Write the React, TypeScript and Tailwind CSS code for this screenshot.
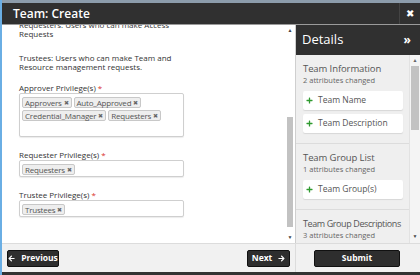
import { FaArrowLeft, FaArrowRight, FaPlus } from 'react-icons/fa';

const font = { fontFamily: '"Open Sans", "Liberation Sans", sans-serif' };

function Tag({ label }: { label: string }) {
  return (
    <span className="flex h-[11px] items-center gap-[2px] rounded-[2px] border border-[#c8c8c8] bg-[#eeeeee] px-[2px] text-[8px] leading-none tracking-[-0.2px] text-[#555]">
      {label}
      <span className="text-[6px] text-[#666]">✖</span>
    </span>
  );
}

function Field({ label, tags, height }: { label: string; tags: string[]; height: string }) {
  return (
    <div>
      <div className="text-[8px] leading-[10px] text-[#333]">
        {label} <span className="text-[#d9302c]">*</span>
      </div>
      <div className={`flex w-[165px] flex-wrap content-start gap-x-[2px] gap-y-[2px] rounded-[2px] border border-[#cfcfcf] bg-white px-[2px] pt-[3px] shadow-[0_1px_1px_rgba(0,0,0,0.08)] ${height}`}>
        {tags.map((t) => (
          <Tag key={t} label={t} />
        ))}
      </div>
    </div>
  );
}

function Change({ label }: { label: string }) {
  return (
    <div className="flex h-[19px] items-center gap-[5px] rounded-[2px] bg-white pl-[3px] text-[8.5px] text-[#555] shadow-[0_1px_1px_rgba(0,0,0,0.1)]">
      <FaPlus className="h-[7px] w-[7px] text-[#2f9a2f]" />
      {label}
    </div>
  );
}

function Section({ title, count, items, last, titleClass = 'text-[9.5px] tracking-[-0.1px]' }: { title: string; count: string; items: string[]; last?: boolean; titleClass?: string }) {
  return (
    <div className={`pl-[7px] pr-[6px] pt-[7px] ${last ? '' : 'border-b border-[#dcdcdc] pb-[10px]'}`}>
      <div className={`whitespace-nowrap leading-[13px] text-[#555] ${titleClass}`}>{title}</div>
      <div className="whitespace-nowrap text-[7.5px] leading-[10px] text-[#666]">{count}</div>
      {items.length > 0 && (
        <div className="mt-[6px] flex flex-col gap-[4px]">
          {items.map((i) => (
            <Change key={i} label={i} />
          ))}
        </div>
      )}
    </div>
  );
}

function DarkButton({ children, className }: { children: React.ReactNode; className: string }) {
  return (
    <button className={`flex h-[17px] items-center justify-center gap-[6px] rounded-[2px] border border-[#111] bg-[#2e2e2e] text-[8.5px] font-bold leading-none text-white ${className}`}>
      {children}
    </button>
  );
}

export default function App() {
  return (
    <div style={font} className="flex h-[275px] w-[420px] flex-col overflow-hidden border-l-2 border-[#6aaee4] bg-[#f1f1f1]">
      <div className="h-[3px] bg-[#8c9cab]" />
      <div className="flex h-[21px] items-center bg-[#303030]">
        <div className="flex-1 pl-[11px] text-[12px] font-semibold text-white">Team: Create</div>
        <div className="flex h-full w-[21px] items-center justify-center border-l border-[#444] text-[10px] text-white">✖</div>
      </div>
      <div className="h-px bg-[#9a9a9a]" />
      <div className="flex h-[218px]">
        <div className="flex w-[293px] bg-white">
          <div className="relative flex-1 overflow-hidden">
            <div className="-mt-[5px] flex flex-col pl-[17px] text-[8px] leading-[9px] text-[#333]">
              <p className="w-[155px]">Requesters: Users who can make Access Requests</p>
              <p className="mt-[15px] w-[155px]">Trustees: Users who can make Team and Resource management requests.</p>
              <div className="mt-[12px]">
                <Field label="Approver Privilege(s)" tags={['Approvers', 'Auto_Approved', 'Credential_Manager', 'Requesters']} height="h-[44px]" />
              </div>
              <div className="mt-[13px]">
                <Field label="Requester Privilege(s)" tags={['Requesters']} height="h-[17px]" />
              </div>
              <div className="mt-[13px]">
                <Field label="Trustee Privilege(s)" tags={['Trustees']} height="h-[17px]" />
              </div>
            </div>
          </div>
          <div className="flex w-[10px] flex-col items-center">
            <div className="mt-[3px] text-[5px] leading-[5px] text-[#444]">▲</div>
            <div className="mt-[84px] h-[110px] w-[6px] bg-[#c2c2c2]" />
            <div className="mt-[8px] text-[5px] leading-[5px] text-[#444]">▼</div>
          </div>
        </div>
        <div className="flex w-[125px] flex-col border-l border-[#cfcfcf]">
          <div className="flex h-[30px] items-center justify-between bg-[#303030] pl-[6px] pr-[9px] text-white">
            <span className="text-[13px]">Details</span>
            <span className="text-[12px] font-bold leading-none">»</span>
          </div>
          <div className="flex flex-1 overflow-hidden bg-[#efefef]">
            <div className="min-w-0 flex-1">
              <Section title="Team Information" count="2 attributes changed" items={['Team Name', 'Team Description']} />
              <Section title="Team Group List" count="1 attributes changed" items={['Team Group(s)']} />
              <Section title="Team Group Descriptions" count="3 attributes changed" items={[]} last titleClass="text-[9px] tracking-[-0.4px]" />
            </div>
            <div className="flex w-[11px] shrink-0 flex-col items-center border-l border-[#e2e2e2] bg-[#f4f4f4]">
              <div className="mt-[3px] text-[5px] leading-[5px] text-[#666]">▲</div>
              <div className="mt-[3px] h-[64px] w-[8px] bg-[#c2c2c2]" />
              <div className="mt-auto mb-[4px] text-[5px] leading-[5px] text-[#444]">▼</div>
            </div>
          </div>
        </div>
      </div>
      <div className="flex h-[29px] border-t border-[#dcdcdc] bg-[#f1f1f1]">
        <div className="flex w-[293px] items-center justify-between pl-[5px] pr-[5px]">
          <DarkButton className="w-[52px]">
            <FaArrowLeft className="h-[7px] w-[7px]" />
            Previous
          </DarkButton>
          <DarkButton className="w-[43px]">
            Next
            <FaArrowRight className="h-[7px] w-[7px]" />
          </DarkButton>
        </div>
        <div className="flex flex-1 items-center border-l border-[#dcdcdc] pl-[18px]">
          <DarkButton className="w-[86px]">Submit</DarkButton>
        </div>
      </div>
      <div className="h-[3px] bg-[#333]" />
    </div>
  );
}
